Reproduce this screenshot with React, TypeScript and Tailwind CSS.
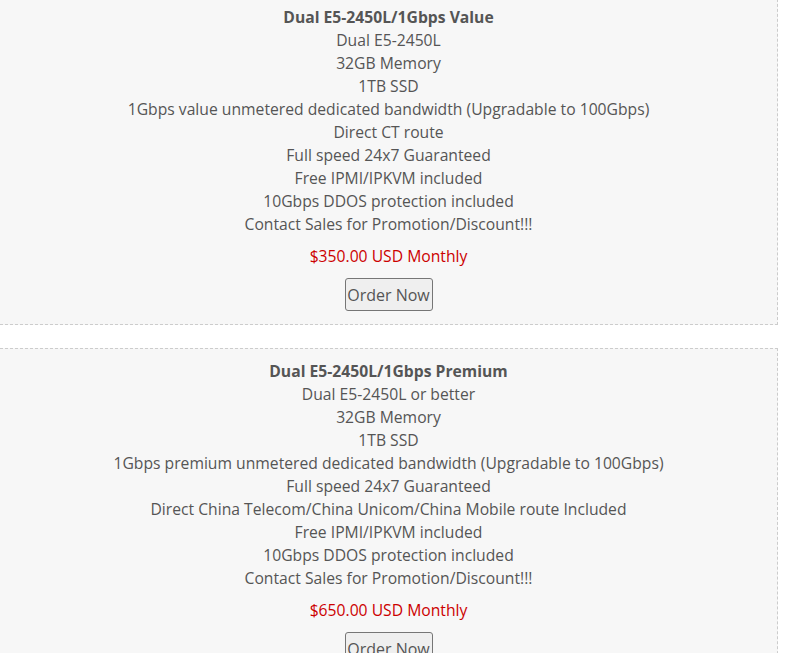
const plans = [
  {
    title: "Dual E5-2450L/1Gbps Value",
    lines: [
      "Dual E5-2450L",
      "32GB Memory",
      "1TB SSD",
      "1Gbps value unmetered dedicated bandwidth (Upgradable to 100Gbps)",
      "Direct CT route",
      "Full speed 24x7 Guaranteed",
      "Free IPMI/IPKVM included",
      "10Gbps DDOS protection included",
      "Contact Sales for Promotion/Discount!!!",
    ],
    price: "$350.00 USD Monthly",
  },
  {
    title: "Dual E5-2450L/1Gbps Premium",
    lines: [
      "Dual E5-2450L or better",
      "32GB Memory",
      "1TB SSD",
      "1Gbps premium unmetered dedicated bandwidth (Upgradable to 100Gbps)",
      "Full speed 24x7 Guaranteed",
      "Direct China Telecom/China Unicom/China Mobile route Included",
      "Free IPMI/IPKVM included",
      "10Gbps DDOS protection included",
      "Contact Sales for Promotion/Discount!!!",
    ],
    price: "$650.00 USD Monthly",
  },
];

function PlanCard({ plan }: { plan: (typeof plans)[number] }) {
  return (
    <div className="w-[778px] border border-l-0 border-dashed border-[#cccccc] bg-[#f7f7f7] pt-[11px] pb-[13px] text-center">
      <div className="text-[15.7px] leading-[23px] font-bold text-[#555555]">{plan.title}</div>
      {plan.lines.map((l) => (
        <div key={l} className="text-[15.7px] leading-[23px] text-[#555555]">
          {l}
        </div>
      ))}
      <div className="mt-[9px] text-[15.7px] leading-[23px] text-[#cc0000]">{plan.price}</div>
      <button className="mt-[10px] h-[33px] w-[88px] rounded-[3px] border border-[#767676] bg-[#efefef] text-[16px] text-[#555555]">
        Order Now
      </button>
    </div>
  );
}

export default function App() {
  return (
    <div
      className="min-h-screen overflow-hidden bg-white"
      style={{ fontFamily: '"Open Sans", sans-serif' }}
    >
      <div className="-mt-[6px] flex flex-col gap-[23px]">
        {plans.map((p) => (
          <PlanCard key={p.title} plan={p} />
        ))}
      </div>
    </div>
  );
}
